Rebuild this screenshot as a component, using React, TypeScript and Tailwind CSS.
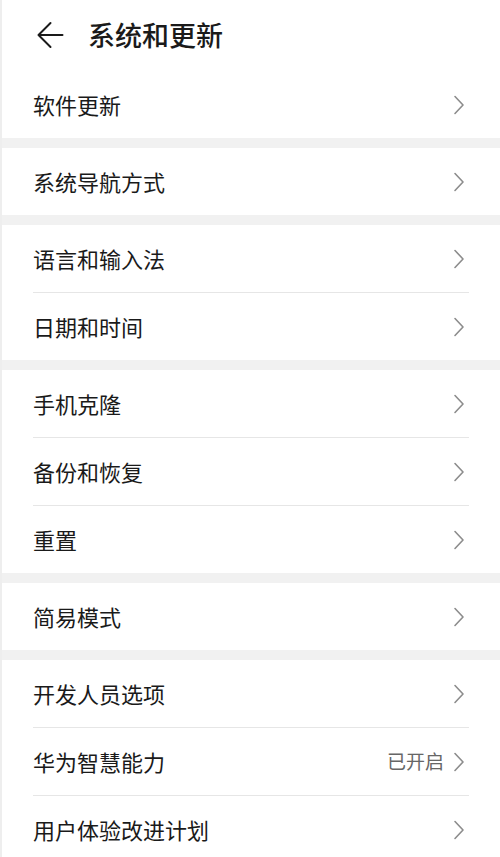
import React from "react";

type Item = { label: string; value?: string };

const groups: Item[][] = [
  [{ label: "软件更新" }],
  [{ label: "系统导航方式" }],
  [{ label: "语言和输入法" }, { label: "日期和时间" }],
  [{ label: "手机克隆" }, { label: "备份和恢复" }, { label: "重置" }],
  [{ label: "简易模式" }],
  [{ label: "开发人员选项" }, { label: "华为智慧能力", value: "已开启" }, { label: "用户体验改进计划" }],
];

const Chevron = () => (
  <svg width="12" height="20" viewBox="0 0 12 20" fill="none">
    <path d="M2 1.5 L10 10 L2 18.5" stroke="#8c8c8c" strokeWidth="1.6" strokeLinecap="round" strokeLinejoin="round" />
  </svg>
);

const Row = ({ item }: { item: Item }) => (
  <div className="h-[67px] flex items-center justify-between pl-[31px] pr-[35px]">
    <span className="text-[22px] text-[#1a1a1a]">{item.label}</span>
    <div className="flex items-center gap-[9px]">
      {item.value && <span className="text-[19px] text-[#666666]">{item.value}</span>}
      <Chevron />
    </div>
  </div>
);

const App = () => {
  return (
    <div
      className="w-[500px] h-[857px] overflow-hidden bg-white border-l-2 border-[#eeeeee]"
      style={{ fontFamily: '"Noto Sans CJK SC", "Noto Sans", sans-serif' }}
    >
      <div className="h-[71px] flex items-center pl-[34px]">
        <svg width="28" height="28" viewBox="0 0 28 28" fill="none" className="mt-[-2px]">
          <path d="M14.5 2 L2.5 14 L14.5 26 M2.5 14 L26.5 14" stroke="#1a1a1a" strokeWidth="2" strokeLinecap="round" strokeLinejoin="round" />
        </svg>
        <h1 className="ml-[24px] text-[27px] font-medium text-[#1a1a1a]">系统和更新</h1>
      </div>
      {groups.map((group, gi) => (
        <div key={gi}>
          {gi > 0 && <div className="h-[10px] bg-[#f1f1f1]" />}
          {group.map((item, i) => (
            <div key={item.label}>
              {i > 0 && <div className="h-px bg-[#e6e6e6] mx-[31px]" />}
              <Row item={item} />
            </div>
          ))}
        </div>
      ))}
    </div>
  );
};

export default App;
